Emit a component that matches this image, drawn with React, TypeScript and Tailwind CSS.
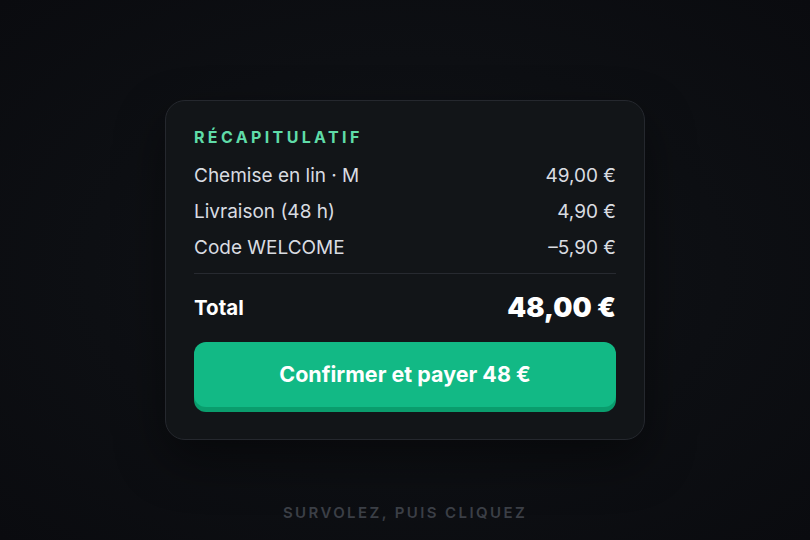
import React from 'react';

type Line = { label: string; amount: string };

const lines: Line[] = [
  { label: 'Chemise en lin · M', amount: '49,00 €' },
  { label: 'Livraison (48 h)', amount: '4,90 €' },
  { label: 'Code WELCOME', amount: '–5,90 €' },
];

const App: React.FC = () => {
  return (
    <div
      className="h-[540px] w-full flex flex-col items-center pt-[100px] bg-[radial-gradient(ellipse_at_center,#121419_0%,#0d0f13_55%,#0a0b0f_100%)]"
      style={{ fontFamily: "Inter, 'Noto Sans', sans-serif" }}
    >
      <div className="w-[480px] h-[340px] rounded-[20px] border border-[#25282e] bg-[#121518] px-[28px] pt-[26px] shadow-[0_20px_50px_rgba(0,0,0,0.45)]">
        <h2 className="text-[16px] leading-[20px] font-bold tracking-[0.21em] text-[#5fdca8]">
          RÉCAPITULATIF
        </h2>

        <ul className="mt-[11px] flex flex-col">
          {lines.map((l) => (
            <li
              key={l.label}
              className="flex justify-between items-center h-[36px] text-[19px] text-[#d9dce1]"
            >
              <span>{l.label}</span>
              <span>{l.amount}</span>
            </li>
          ))}
        </ul>

        <div className="mt-[7px] h-px bg-[#272a30]" />

        <div className="flex justify-between items-center h-[68px]">
          <span className="text-[20.5px] font-bold text-white">Total</span>
          <span className="text-[27px] font-black text-white">48,00 €</span>
        </div>

        <button className="w-full h-[65px] rounded-[12px] bg-[#12b985] shadow-[0_5px_0_#0a9d6d] text-white text-[21.5px] font-bold">
          Confirmer et payer 48 €
        </button>
      </div>

      <p className="mt-[63px] text-[15px] leading-[20px] font-semibold tracking-[0.16em] text-[#3b3f46]">
        SURVOLEZ, PUIS CLIQUEZ
      </p>
    </div>
  );
};

export default App;
